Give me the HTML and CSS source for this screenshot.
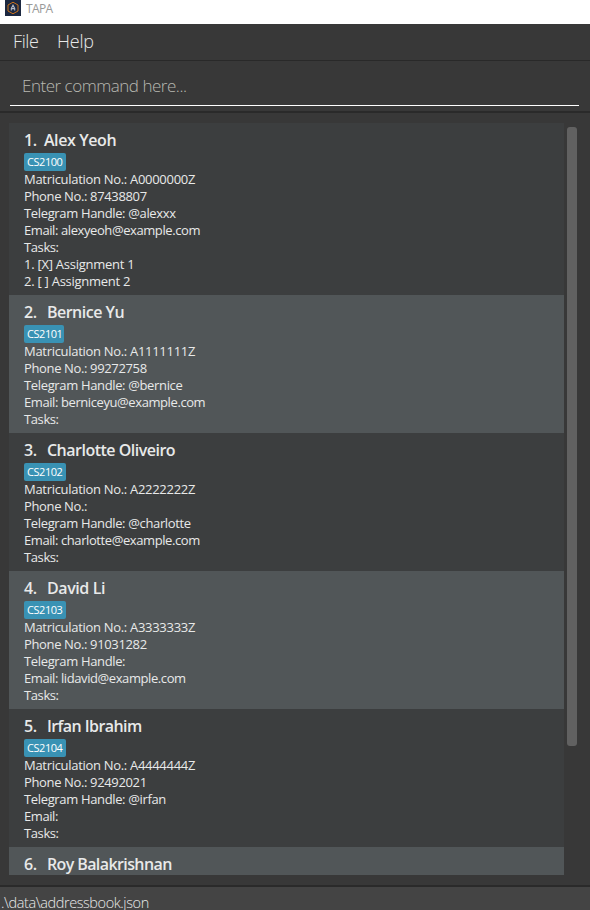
FILE: index.html
```html
<!DOCTYPE html>
<html lang="en">
<head>
<meta charset="utf-8">
<title>TAPA</title>
<link rel="stylesheet" href="styles.css">
</head>
<body>
<div class="window">
  <header class="titlebar">
    <svg class="logo" width="16" height="16" viewBox="0 0 16 16">
      <rect width="16" height="16" fill="#1c2840"/>
      <path d="M8 2.2 13 5V11L8 13.8 3 11V5Z" fill="none" stroke="#c9721d" stroke-width="1"/>
      <path d="M6.3 10.6V8.4L8 5.2l1.7 3.2v2.2M6.5 8.6h3" fill="none" stroke="#b4bac6" stroke-width="1.1"/>
    </svg>
    <span class="title">TAPA</span>
  </header>
  <nav class="menubar"><span class="file">File</span><span class="help">Help</span></nav>
  <section class="command"><div class="field"><span>Enter command here...</span></div></section>
  <main class="content">
    <div class="list">
      <article class="card">
        <h2 class="first"><span>1.</span><span class="name n1">Alex Yeoh</span></h2>
        <div class="tags"><span class="tag">CS2100</span></div>
        <p class="matric">Matriculation No.: A0000000Z</p>
        <p class="phone">Phone No.: 87438807</p>
        <p class="handle">Telegram Handle: @alexxx</p>
        <p class="email">Email: alexyeoh@example.com</p>
        <p>Tasks:</p>
        <p class="task">1. [X] Assignment 1</p>
        <p class="task">2. [ ] Assignment 2</p>
      </article>
      <article class="card">
        <h2><span>2.</span><span class="name n2">Bernice Yu</span></h2>
        <div class="tags"><span class="tag narrow">CS2101</span></div>
        <p class="matric">Matriculation No.: A1111111Z</p>
        <p class="phone">Phone No.: 99272758</p>
        <p class="handle">Telegram Handle: @bernice</p>
        <p class="email">Email: berniceyu@example.com</p>
        <p>Tasks:</p>
      </article>
      <article class="card">
        <h2><span>3.</span><span class="name n3">Charlotte Oliveiro</span></h2>
        <div class="tags"><span class="tag">CS2102</span></div>
        <p class="matric">Matriculation No.: A2222222Z</p>
        <p class="phone">Phone No.:</p>
        <p class="handle">Telegram Handle: @charlotte</p>
        <p class="email">Email: charlotte@example.com</p>
        <p>Tasks:</p>
      </article>
      <article class="card">
        <h2><span>4.</span><span class="name n4">David Li</span></h2>
        <div class="tags"><span class="tag">CS2103</span></div>
        <p class="matric">Matriculation No.: A3333333Z</p>
        <p class="phone">Phone No.: 91031282</p>
        <p class="handle">Telegram Handle:</p>
        <p class="email">Email: lidavid@example.com</p>
        <p>Tasks:</p>
      </article>
      <article class="card">
        <h2><span>5.</span><span class="name n5">Irfan Ibrahim</span></h2>
        <div class="tags"><span class="tag">CS2104</span></div>
        <p class="matric">Matriculation No.: A4444444Z</p>
        <p class="phone">Phone No.: 92492021</p>
        <p class="handle">Telegram Handle: @irfan</p>
        <p class="email">Email:</p>
        <p>Tasks:</p>
      </article>
      <article class="card">
        <h2><span>6.</span><span class="name n6">Roy Balakrishnan</span></h2>
      </article>
    </div>
    <div class="scrollbar"><div class="thumb"></div></div>
  </main>
  <footer class="status"><span>.\data\addressbook.json</span></footer>
</div>
</body>
</html>
```
FILE: styles.css
```css
* { box-sizing: border-box; }
body {
  margin: 0;
  background: #383838;
  font-family: "Open Sans", "Noto Sans", sans-serif;
  color: #e8e9e9;
}
.window { display: flex; flex-direction: column; width: 590px; height: 910px; overflow: hidden; }
.titlebar { display: flex; height: 24px; padding-left: 5px; background: #fff; flex: none; }
.logo { display: block; }
.title { margin-left: 5px; font-size: 12px; line-height: 17px; letter-spacing: -0.6px; color: #999; }
.menubar {
  display: flex; flex: none; height: 37px; padding-left: 13px;
  border-bottom: 1px solid #292929;
  font-size: 18px; line-height: 35px; font-weight: 300;
}
.file { width: 44px; letter-spacing: -0.4px; }
.help { letter-spacing: -0.2px; }
.command { flex: none; height: 52px; padding: 9px 11px 6px 10px; border-bottom: 2px solid #2a2a2a; }
.field {
  height: 36px; padding-left: 12px; border-bottom: 1px solid #fff;
  font-size: 17px; line-height: 32px; font-weight: 300; letter-spacing: -0.48px; color: #b8b8b2;
}
.content { display: flex; flex: none; height: 774px; padding: 10px 0 10px 9px; border-bottom: 2px solid #2a2a2a; }
.list { width: 555px; height: 752px; overflow: hidden; }
.card { height: 138px; padding: 7px 15px 5px; background: #3c3e3f; }
.card:first-child { height: 172px; }
.card:nth-child(even) { background: #515658; }
h2 { display: flex; gap: 10px; margin: 0; height: 23px; font-size: 16px; line-height: 21px; font-weight: 600; letter-spacing: -0.3px; }
.first { gap: 7px; }
.n1 { letter-spacing: -0.4px; }
.n2 { letter-spacing: -0.5px; }
.n3 { letter-spacing: -0.5px; }
.n4 { letter-spacing: -0.4px; }
.n5 { letter-spacing: -0.57px; }
.n6 { letter-spacing: -0.6px; }
.tags { display: flex; height: 18px; }
.tag { width: 42px; padding-left: 3px; border-radius: 2px; background: #3992b4; color: #fff; font-size: 11px; line-height: 18px; letter-spacing: -0.45px; }
.narrow { width: 40px; }
p { margin: 0; font-size: 13px; line-height: 17px; letter-spacing: -0.4px; white-space: pre; }
.matric { letter-spacing: -0.3px; }
.phone { letter-spacing: -0.36px; }
.handle { letter-spacing: -0.35px; }
.email { letter-spacing: -0.41px; }
.task { letter-spacing: -0.26px; }
.scrollbar { width: 16px; padding: 4px 3px; }
.thumb { width: 10px; height: 619px; border-radius: 3px; background: #616161; }
.status { flex: 1; padding-left: 1px; background: #444; font-size: 14.5px; line-height: 31px; font-weight: 300; letter-spacing: -0.42px; }
```
